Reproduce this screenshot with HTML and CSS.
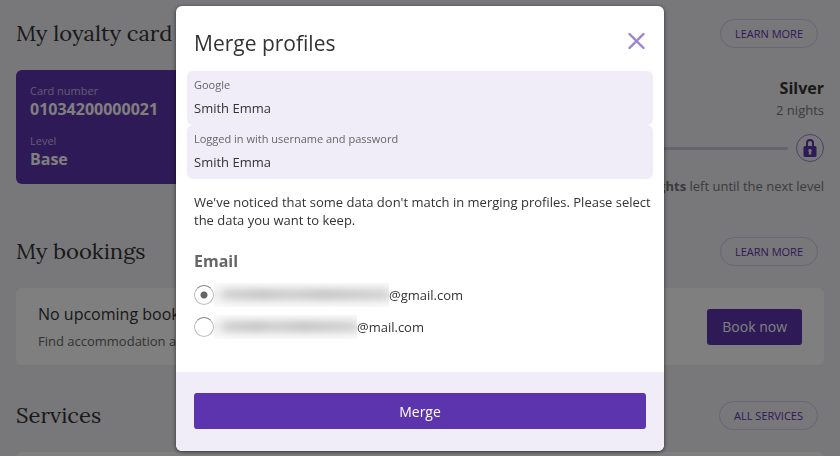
FILE: index.html
```html
<!DOCTYPE html>
<html lang="en">
<head>
    <meta charset="utf-8">
    <meta name="viewport" content="width=device-width, initial-scale=1">
    <title>My account</title>
    <link rel="stylesheet" href="styles.css">
</head>
<body>
    <main class="page">
        <section class="section">
            <div class="section-header">
                <h2>My loyalty card</h2>
                <a class="pill" href="#">Learn more</a>
            </div>
            <div class="loyalty">
                <div class="loyalty-card">
                    <div class="card-label">Card number</div>
                    <div class="card-value">01034200000021</div>
                    <div class="card-label">Level</div>
                    <div class="card-value">Base</div>
                </div>
                <div class="next-level">
                    <div class="level-name">Silver</div>
                    <div class="level-text">2 nights</div>
                    <div class="progress">
                        <div class="progress-line"></div>
                        <div class="progress-lock">
                            <svg width="14" height="20" viewBox="0 0 14 20">
                                <path d="M4 9V5a3 3 0 0 1 6 0V9" fill="none" stroke="#5c34ad" stroke-width="2"/>
                                <path fill="#5c34ad" fill-rule="evenodd" d="M2 8h10a1.500 1.500 0 0 1 1.500 1.500v8A1.500 1.500 0 0 1 12 19H2a1.500 1.500 0 0 1-1.500-1.500v-8A1.500 1.500 0 0 1 2 8zM7 11a1.700 1.700 0 0 0-1 3.100L5.600 16.500h2.800L8 14.100A1.700 1.700 0 0 0 7 11z"/>
                            </svg>
                        </div>
                    </div>
                    <div class="level-text"><b>2 nights</b> left until the next level</div>
                </div>
            </div>
        </section>

        <section class="section">
            <div class="section-header">
                <h2>My bookings</h2>
                <a class="pill" href="#">Learn more</a>
            </div>
            <div class="panel">
                <div>
                    <div class="panel-title">No upcoming bookings</div>
                    <div class="panel-text">Find accommodation and book</div>
                </div>
                <button class="btn" type="button">Book now</button>
            </div>
        </section>

        <section class="section">
            <div class="section-header">
                <h2>Services</h2>
                <a class="pill" href="#">All services</a>
            </div>
            <div class="panel"></div>
        </section>
    </main>

    <div class="overlay">
        <form class="modal" role="dialog" aria-modal="true" aria-labelledby="modal-title">
            <div class="modal-header">
                <h1 id="modal-title">Merge profiles</h1>
                <button class="close" type="button" aria-label="Close">
                    <svg width="18" height="18" viewBox="0 0 18 18">
                        <path d="M1.500 2l14 14M15.500 2l-14 14" fill="none" stroke="#9c83d0" stroke-width="2.400" stroke-linecap="round"/>
                    </svg>
                </button>
            </div>
            <div class="profile">
                <div class="profile-source">Google</div>
                <div>Smith Emma</div>
            </div>
            <div class="profile">
                <div class="profile-source">Logged in with username and password</div>
                <div>Smith Emma</div>
            </div>
            <div class="modal-body">
                <p>We've noticed that some data don't match in merging profiles. Please select the data you want to keep.</p>
                <fieldset>
                    <legend>Email</legend>
                    <label class="option">
                        <input type="radio" name="email" checked>
                        <span class="masked masked-long"></span>@gmail.com
                    </label>
                    <label class="option">
                        <input type="radio" name="email">
                        <span class="masked masked-short"></span>@mail.com
                    </label>
                </fieldset>
            </div>
            <div class="modal-footer">
                <button class="btn btn-wide" type="submit">Merge</button>
            </div>
        </form>
    </div>
</body>
</html>
```

FILE: styles.css
```css
* {
    box-sizing: border-box;
}
body {
    margin: 0;
    height: 100vh;
    overflow: hidden;
    background: #f0eff4;
    color: #333;
    font-family: "Open Sans", sans-serif;
    font-size: 13px;
    line-height: 18px;
}
h1, h2, p {
    margin: 0;
    font-weight: normal;
}
.page {
    padding: 19px 16px 0;
}
.section {
    margin-bottom: 36px;
}
.section-header {
    display: flex;
    align-items: center;
    justify-content: space-between;
    margin-bottom: 22px;
    padding-right: 6px;
}
.section-header h2 {
    font-family: "Lora", "Liberation Serif", serif;
    font-size: 22px;
    line-height: 29px;
}
.pill {
    padding: 0 14px;
    border: 1px solid #d2cae6;
    border-radius: 15px;
    color: #5c34ad;
    font-size: 11px;
    line-height: 27px;
    text-decoration: none;
    text-transform: uppercase;
}

/* loyalty card */
.loyalty {
    display: grid;
    grid-template-columns: 1fr 2fr;
    align-items: start;
    gap: 24px;
}
.loyalty-card {
    padding: 13px 14px 15px;
    border-radius: 6px;
    background: #5c34ad;
    color: #fff;
}
.card-label {
    color: #c6b8e6;
    font-size: 11px;
    line-height: 16px;
}
.card-value {
    font-size: 16px;
    font-weight: bold;
    line-height: 20px;
}
.card-value + .card-label {
    margin-top: 14px;
}
.next-level {
    padding: 6px 0 5px;
    text-align: right;
}
.level-name {
    font-size: 16px;
    font-weight: bold;
    line-height: 24px;
}
.level-text {
    color: #777;
    line-height: 20px;
}
.progress {
    display: flex;
    align-items: center;
    gap: 8px;
    margin: 14px 0;
}
.progress-line {
    flex: 1;
    height: 3px;
    border-radius: 2px;
    background: #cdc5e0;
}
.progress-lock {
    display: flex;
    align-items: center;
    justify-content: center;
    width: 28px;
    height: 28px;
    border: 1px solid #9c83d0;
    border-radius: 50%;
}

/* panels */
.panel {
    display: flex;
    align-items: center;
    justify-content: space-between;
    min-height: 77px;
    padding: 11px 22px;
    border-radius: 6px;
    background: #fff;
}
.panel-title {
    font-size: 16px;
    line-height: 28px;
}
.panel-text {
    color: #666;
    line-height: 26px;
}
.btn {
    height: 36px;
    padding: 0 15px;
    border: 0;
    border-radius: 3px;
    background: #5c34ad;
    color: #fff;
    font: 14px "Open Sans", sans-serif;
    cursor: pointer;
}
.btn-wide {
    width: 100%;
}

/* modal */
.overlay {
    position: fixed;
    inset: 0;
    display: flex;
    align-items: flex-start;
    justify-content: center;
    padding: 6px;
    background: rgba(0, 0, 0, 0.5);
}
.modal {
    width: 100%;
    max-width: 488px;
    overflow: hidden;
    border-radius: 6px;
    background: #fff;
    box-shadow: 0 1px 4px rgba(0, 0, 0, 0.6);
}
.modal-header {
    display: flex;
    align-items: flex-start;
    justify-content: space-between;
    padding: 22px 18px 13px;
}
.modal-header h1 {
    font-size: 21px;
    line-height: 30px;
}
.close {
    display: flex;
    padding: 4px 0;
    border: 0;
    background: none;
    cursor: pointer;
}
.profile {
    margin: 0 11px;
    padding: 5px 7px 8px;
    border-radius: 6px;
    background: #f0ecf8;
}
.profile-source {
    margin-bottom: 5px;
    color: #666;
    font-size: 11px;
}
.modal-body {
    padding: 14px 6px 29px 18px;
}
fieldset {
    margin: 20px 0 0;
    padding: 0;
    border: 0;
}
legend {
    margin-bottom: 6px;
    padding: 0;
    color: #666;
    font-size: 16px;
    font-weight: bold;
    line-height: 24px;
}
.option {
    display: flex;
    align-items: center;
    height: 32px;
}
.option input {
    appearance: none;
    width: 20px;
    height: 20px;
    margin: 0;
    border: 1px solid #bbb;
    border-top-color: #888;
    border-radius: 50%;
}
.option input:checked {
    background: radial-gradient(circle, #666 3px, transparent 4px);
}
.masked {
    height: 24px;
    overflow: hidden;
    background: linear-gradient(#fafafa, #f0f0f0 50%, #fafafa);
}
.masked::before {
    content: "";
    display: block;
    height: 9px;
    margin: 7px 0 0 8px;
    background: linear-gradient(90deg, #ccc, #bbb 25%, #c8c8c8 40%, #bbb 60%, #ccc);
    filter: blur(4px);
}
.masked-long {
    width: 175px;
}
.masked-short {
    width: 143px;
}
.modal-footer {
    padding: 21px 18px 22px;
    background: #f0ecf8;
}
```
